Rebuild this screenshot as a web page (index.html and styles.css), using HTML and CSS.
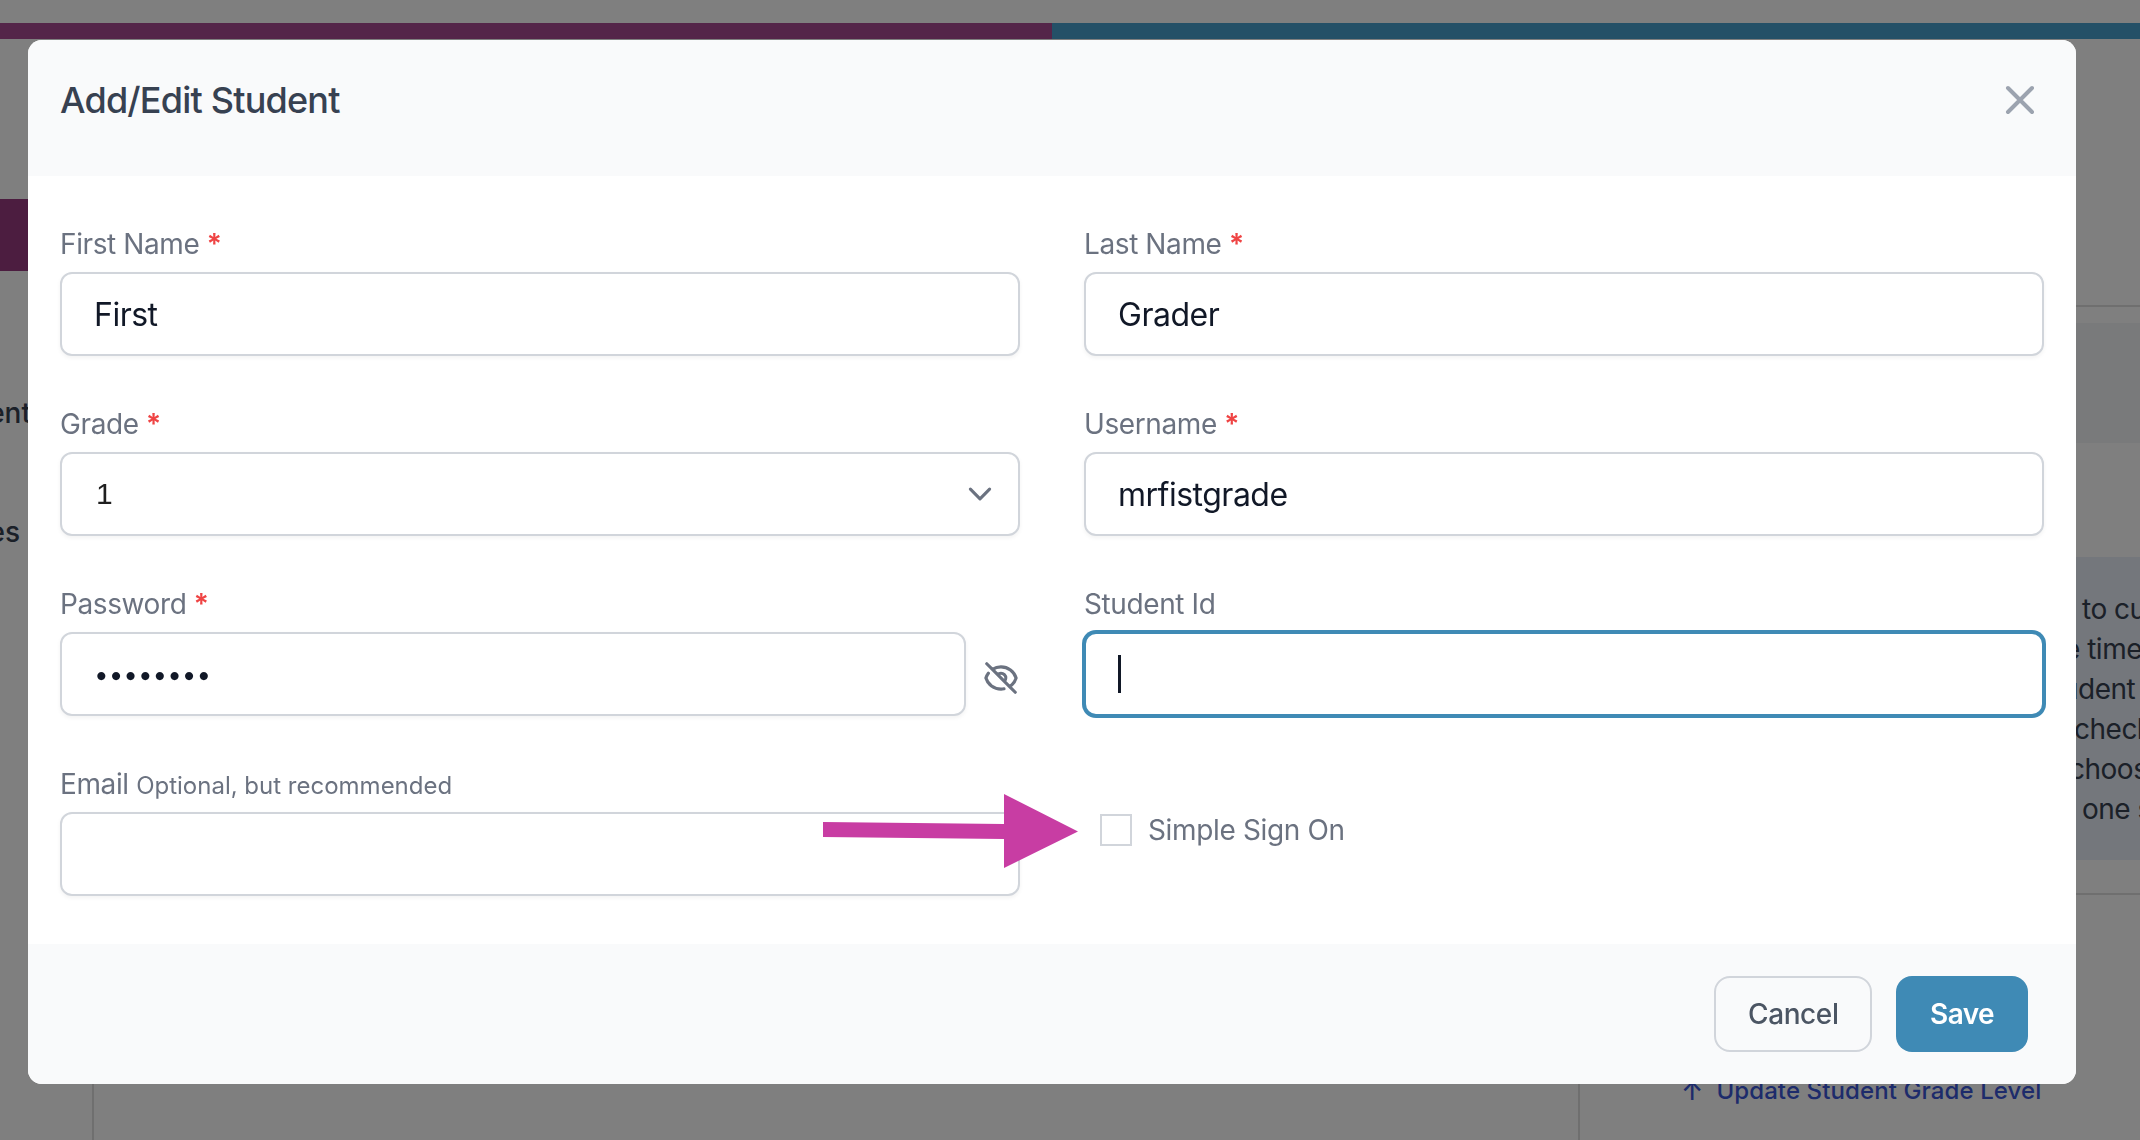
FILE: index.html
```html
<!DOCTYPE html>
<html lang="en">
<head>
<meta charset="utf-8">
<title>Add/Edit Student</title>
<link rel="stylesheet" href="styles.css">
</head>
<body>
<div class="page">
  <div class="topbar"><div class="bar-purple"></div><div class="bar-blue"></div></div>
  <div class="page-main">
    <aside class="side">
      <div class="side-active"></div>
      <div class="side-a">ent</div>
      <div class="side-b">es</div>
    </aside>
    <div class="page-center"></div>
    <aside class="rail">
      <div class="rail-line"></div>
      <div class="rail-band"></div>
      <div class="rail-gray"></div>
      <div class="rail-gap"></div>
      <div class="rail-note">
        <div class="ln ln1">to cu</div>
        <div class="ln ln2">e time</div>
        <div class="ln ln3">udent</div>
        <div class="ln ln4">check</div>
        <div class="ln ln5">choos</div>
        <div class="ln ln6">one s</div>
      </div>
      <div class="rail-line2"></div>
    </aside>
  </div>
  <div class="page-foot">
    <div class="foot-left"></div>
    <div class="foot-right"><span class="update-arrow">↑</span><span class="update-link">Update Student Grade Level</span></div>
  </div>
</div>
<div class="overlay"></div>
<div class="modal">
  <header class="modal-head">
    <h2 class="modal-title">Add/Edit Student</h2>
    <svg class="close" viewBox="0 0 24 24" fill="none" stroke="currentColor" stroke-width="2" stroke-linecap="round" stroke-linejoin="round"><path d="M6 18L18 6M6 6l12 12"/></svg>
  </header>
  <form class="modal-body">
    <div class="field">
      <label class="label">First Name <span class="req">*</span></label>
      <input class="input" type="text" value="First">
    </div>
    <div class="field">
      <label class="label">Last Name <span class="req">*</span></label>
      <input class="input" type="text" value="Grader">
    </div>
    <div class="field">
      <label class="label">Grade <span class="req">*</span></label>
      <div class="input select"><span class="select-value">1</span>
        <svg class="chev" viewBox="0 0 20 20" fill="none" stroke="#6b7280" stroke-width="1.3" stroke-linecap="round" stroke-linejoin="round"><path d="M6 8l4 4 4-4"/></svg>
      </div>
    </div>
    <div class="field">
      <label class="label">Username <span class="req">*</span></label>
      <input class="input" type="text" value="mrfistgrade">
    </div>
    <div class="field">
      <label class="label">Password <span class="req">*</span></label>
      <div class="pw-row">
        <input class="input pw" type="password" value="password">
        <svg class="eye" viewBox="0 0 24 24" fill="none" stroke="currentColor" stroke-width="2" stroke-linecap="round" stroke-linejoin="round"><path d="M13.875 18.825A10.05 10.05 0 0112 19c-4.478 0-8.268-2.943-9.543-7a9.97 9.97 0 011.563-3.029m5.858.908a3 3 0 114.243 4.243M9.878 9.878l4.242 4.242M9.88 9.88l-3.29-3.29m7.532 7.532l3.29 3.29M3 3l3.59 3.59m0 0A9.953 9.953 0 0112 5c4.478 0 8.268 2.943 9.543 7a10.025 10.025 0 01-4.132 5.411m0 0L21 21"/></svg>
      </div>
    </div>
    <div class="field">
      <label class="label">Student Id</label>
      <div class="input focused"><span class="caret"></span></div>
    </div>
    <div class="field">
      <label class="label">Email <span class="hint">Optional, but recommended</span></label>
      <input class="input" type="text">
    </div>
    <div class="check-cell">
      <span class="checkbox"></span>
      <span class="check-label">Simple Sign On</span>
    </div>
  </form>
  <footer class="modal-foot">
    <button class="btn btn-cancel" type="button">Cancel</button>
    <button class="btn btn-save" type="button">Save</button>
  </footer>
  <svg class="arrow" viewBox="0 0 256 74" fill="#c83da3"><polygon points="0,28 181,30 181,0 255,37.500 181,74 181,45 0,43"/></svg>
</div>
</body>
</html>
```
FILE: styles.css
```css
* { box-sizing: border-box; }
html, body { margin: 0; padding: 0; height: 100%; overflow: hidden; }
body { font-family: Inter, "Liberation Sans", sans-serif; background: #fff; color: #111827; }

.page { width: 2140px; height: 1140px; display: flex; flex-direction: column; padding-top: 23px; overflow: hidden; }
.topbar { display: flex; height: 16px; flex: none; }
.bar-purple { width: 1052px; background: #a84a92; }
.bar-blue { flex: 1; background: #48a0ce; }

.page-main { display: flex; flex: none; height: 1045px; justify-content: space-between; }
.side { width: 28px; overflow: hidden; padding-top: 160px; font-size: 28px; font-weight: 500; color: #374151; }
.side-active { height: 72px; background: #983a80; }
.side-a { display: flex; justify-content: flex-end; margin-top: 122px; margin-right: -3px; line-height: 40px; white-space: nowrap; }
.side-b { display: flex; justify-content: flex-end; margin-top: 79px; margin-right: 8px; line-height: 40px; white-space: nowrap; }
.page-center { flex: 1; }

.rail { width: 64px; padding-top: 266px; }
.rail-line { height: 2px; background: #dedede; }
.rail-band { height: 16px; }
.rail-gray { height: 120px; background: #f3f4f6; }
.rail-gap { height: 114px; }
.rail-note { height: 303px; background: #e8eef8; padding-top: 32px; font-size: 28px; line-height: 40px; letter-spacing: -0.5px; color: #374151; white-space: nowrap; overflow: hidden; }
.ln1, .ln6 { padding-left: 6px; }
.ln2 { margin-left: -12px; }
.ln3 { margin-left: -14px; }
.ln4 { margin-left: -2px; }
.ln5 { margin-left: -7px; }
.rail-line2 { height: 2px; margin-top: 33px; background: #dedede; }

.page-foot { display: flex; flex: 1; }
.foot-left { width: 1488px; margin-left: 92px; border-left: 2px solid #dedede; border-right: 2px solid #dedede; }
.foot-right { flex: 1; display: flex; gap: 13px; padding-left: 101px; margin-top: -10px; font-size: 24px; font-weight: 500; letter-spacing: 0.1px; color: #3b57d6; white-space: nowrap; line-height: 34px; }
.update-arrow { font-size: 26px; }

.overlay { position: fixed; inset: 0; background: rgba(0, 0, 0, 0.5); }

.modal { position: fixed; left: 28px; top: 40px; width: 2048px; height: 1044px; border-radius: 14px; overflow: hidden; background: #fff; display: flex; flex-direction: column; }
.modal-head { height: 136px; flex: none; background: #f9fafb; display: flex; justify-content: space-between; align-items: flex-start; padding: 32px 32px 0; }
.modal-title { margin: 0; font-size: 36px; line-height: 56px; font-weight: 500; letter-spacing: -0.8px; color: #374151; }
.close { width: 48px; height: 48px; margin-top: 4px; color: #9ca3af; }

.modal-body { flex: 1; display: grid; grid-template-columns: 960px 960px; column-gap: 64px; row-gap: 48px; padding: 48px 32px; align-content: start; }
.field { display: flex; flex-direction: column; gap: 8px; min-width: 0; }
.label { font-size: 28px; line-height: 40px; letter-spacing: -0.4px; color: #6b7280; }
.req { color: #ef4444; font-weight: 600; }
.hint { font-size: 24px; line-height: 1; letter-spacing: 0; }

.input { display: block; width: 100%; height: 84px; padding: 0 32px; border: 2px solid #d1d5db; border-radius: 12px; background: #fff; font: 400 32px Inter, "Liberation Sans", sans-serif; letter-spacing: -0.5px; color: #111827; box-shadow: 0 2px 4px rgba(0, 0, 0, 0.05); outline: none; }
.select { display: flex; align-items: center; justify-content: space-between; padding: 0 14px 0 34px; font-family: "Liberation Sans", sans-serif; font-size: 30px; letter-spacing: 0; color: #1f1f1f; }
.chev { width: 48px; height: 48px; }
.pw-row { display: flex; align-items: center; gap: 16px; }
.input.pw { flex: none; width: 906px; font-size: 26px; letter-spacing: 0; }
.eye { width: 38px; height: 38px; color: #6b7280; margin-top: 8px; flex: none; }
.focused { border-color: #3f8ab5; box-shadow: 0 0 0 2px #3f8ab5; display: flex; align-items: center; }
.caret { width: 2.500px; height: 38px; background: #111827; }

.check-cell { display: flex; align-items: center; gap: 16px; padding-left: 16px; height: 132px; }
.checkbox { width: 32px; height: 32px; border: 2px solid #d1d5db; background: #fff; flex: none; }
.check-label { font-size: 28px; line-height: 40px; letter-spacing: -0.35px; color: #6b7280; }

.modal-foot { flex: none; height: 140px; background: #f9fafb; display: flex; justify-content: flex-end; align-items: center; gap: 24px; padding-right: 48px; }
.btn { height: 76px; border-radius: 16px; font: 500 28px Inter, "Liberation Sans", sans-serif; letter-spacing: -0.4px; padding: 0 32px; }
.btn-cancel { width: 158px; background: #f9fafb; border: 2px solid #d1d5db; color: #4b5563; }
.btn-save { width: 132px; background: #3f8ab5; border: 0; color: #fff; font-weight: 600; letter-spacing: -0.6px; }

.arrow { position: absolute; left: 795px; top: 754px; width: 256px; height: 74px; }
```
